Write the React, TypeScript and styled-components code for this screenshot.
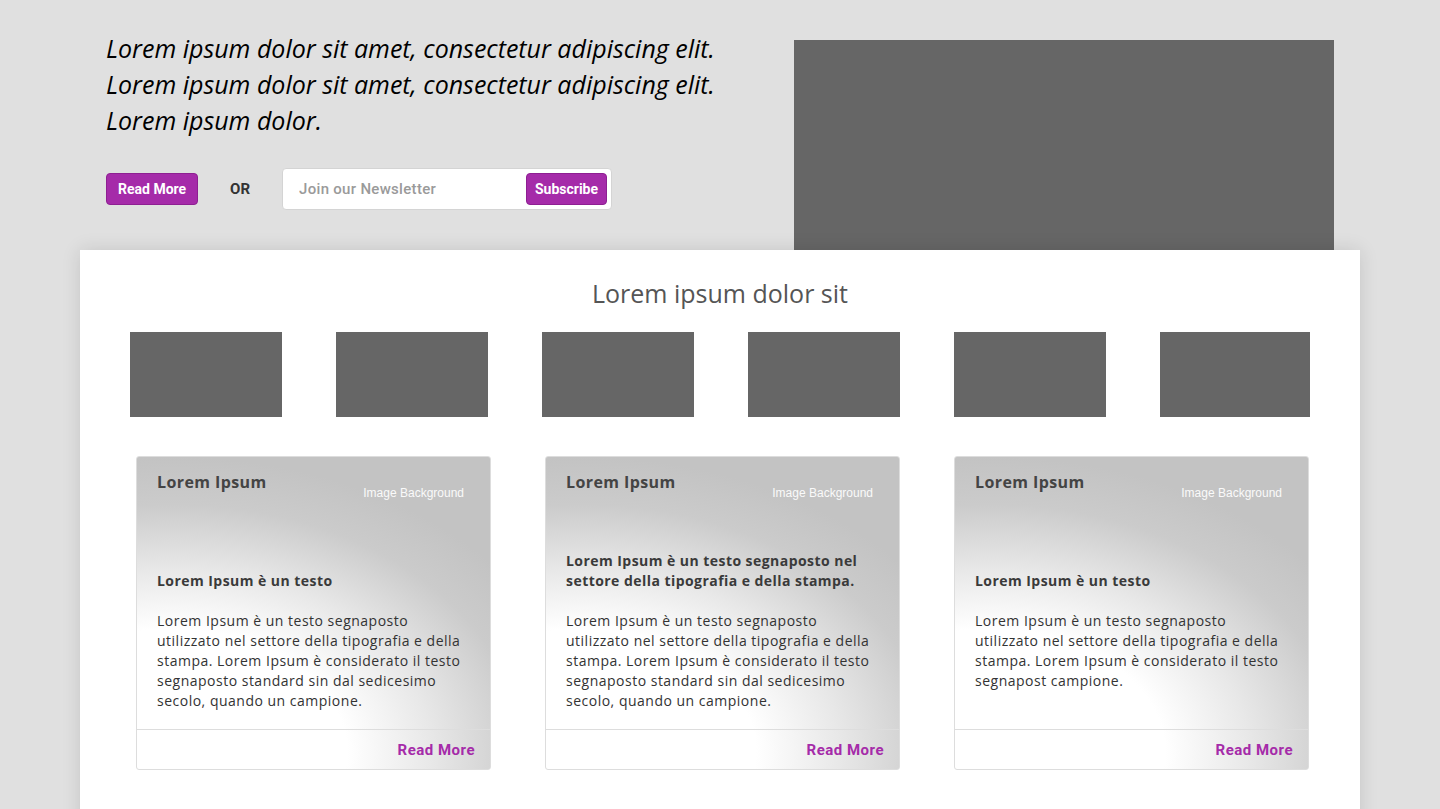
import styled, { createGlobalStyle } from 'styled-components';

const GlobalStyle = createGlobalStyle`
  * {
    box-sizing: border-box;
  }

  body {
    margin: 0;
    background-color: #e0e0e0;
    font-family: 'Open Sans', sans-serif;
    overflow: hidden;
  }
`;

const Page = styled.div`
  width: 1280px;
  margin: 0 auto;
`;

const Hero = styled.section`
  display: flex;
  justify-content: space-between;
  padding: 40px 26px 0 26px;
`;

const HeroLeft = styled.div`
  display: flex;
  flex-direction: column;
`;

const HeroText = styled.h1`
  margin: -10px 0 0;
  font-family: 'Open Sans', sans-serif;
  font-style: italic;
  font-weight: 400;
  font-size: 25px;
  line-height: 36px;
  color: #000;
`;

const Actions = styled.div`
  display: flex;
  align-items: center;
  margin-top: 30px;
`;

const PurpleButton = styled.button<{ $px: number }>`
  height: 32px;
  padding: 0 ${(p) => p.$px}px;
  border: 1px solid #8e1f92;
  border-radius: 4px;
  background-color: #a52ba9;
  color: #fff;
  font-family: Roboto, 'Liberation Sans', sans-serif;
  font-size: 14px;
  font-weight: 700;
  cursor: pointer;
`;

const Or = styled.span`
  margin: 0 32px;
  font-family: Roboto, 'Liberation Sans', sans-serif;
  font-size: 15px;
  font-weight: 700;
  color: #333;
`;

const Newsletter = styled.form`
  display: flex;
  align-items: center;
  width: 330px;
  height: 42px;
  padding: 0 4px 0 14px;
  background-color: #fff;
  border: 1px solid #d4d4d4;
  border-radius: 4px;
`;

const NewsInput = styled.input`
  flex: 1;
  min-width: 0;
  border: none;
  outline: none;
  background: transparent;
  font-family: Roboto, 'Liberation Sans', sans-serif;
  font-size: 15px;
  font-weight: 500;
  letter-spacing: 0.3px;
  color: #333;

  &::placeholder {
    color: #9a9a9a;
  }
`;

const ImageBox = styled.div<{ $w: number; $h: number }>`
  width: ${(p) => p.$w}px;
  height: ${(p) => p.$h}px;
  background-color: #666;
  flex-shrink: 0;
`;

const Panel = styled.main`
  background-color: #fff;
  box-shadow: 0 0 18px rgba(0, 0, 0, 0.12);
  padding: 25px 50px 60px;
  position: relative;
`;

const PanelTitle = styled.h2`
  margin: 0;
  text-align: center;
  font-family: 'Open Sans', sans-serif;
  font-weight: 400;
  font-size: 25px;
  line-height: 36px;
  color: #555;
`;

const Thumbs = styled.div`
  display: flex;
  gap: 54px;
  margin-top: 21px;
`;

const Cards = styled.div`
  display: grid;
  grid-template-columns: repeat(3, 355px);
  column-gap: 54px;
  margin-top: 39px;
  padding-left: 6px;
`;

const Card = styled.article`
  display: flex;
  flex-direction: column;
  height: 314px;
  border: 1px solid #ddd;
  border-radius: 3px;
  overflow: hidden;
  background: radial-gradient(
    ellipse 118% 95% at 10% 95%,
    #ffffff 0%,
    #ffffff 42%,
    #e8e8e8 62%,
    #cbcbcb 84%,
    #c3c3c3 100%
  );
`;

const CardBody = styled.div`
  flex: 1;
  display: flex;
  flex-direction: column;
  padding: 15px 21px 0 20px;
`;

const CardHead = styled.div`
  display: flex;
  justify-content: space-between;
  align-items: flex-start;
  height: 20px;
  padding-right: 5px;
`;

const CardTitle = styled.h3`
  margin: 0;
  font-family: 'Open Sans', sans-serif;
  font-size: 16px;
  font-weight: 700;
  line-height: 20px;
  letter-spacing: 0.4px;
  color: #444;
`;

const BgLabel = styled.span`
  margin-top: 14px;
  font-family: 'Liberation Sans', Arial, sans-serif;
  font-size: 12px;
  line-height: 14px;
  color: #fafafa;
`;

const SubtitleWrap = styled.div`
  display: flex;
  align-items: flex-end;
  height: 99px;
`;

const Subtitle = styled.h4`
  margin: 0;
  font-family: 'Open Sans', sans-serif;
  font-size: 14px;
  font-weight: 700;
  line-height: 20px;
  letter-spacing: 0.45px;
  color: #3a3a3a;
`;

const CardText = styled.p`
  margin: 20px 0 0;
  font-family: 'Open Sans', sans-serif;
  font-size: 14px;
  line-height: 20px;
  letter-spacing: 0.5px;
  color: #333;
`;

const CardFooter = styled.div`
  display: flex;
  justify-content: flex-end;
  align-items: center;
  height: 40px;
  padding-right: 15px;
  border-top: 1px solid #ddd;
`;

const CardLink = styled.a`
  font-family: Roboto, 'Liberation Sans', sans-serif;
  font-size: 15px;
  font-weight: 700;
  letter-spacing: 0.5px;
  color: #a52ba9;
  text-decoration: none;
  cursor: pointer;
`;

const cards = [
  {
    subtitle: 'Lorem Ipsum è un testo',
    text: 'Lorem Ipsum è un testo segnaposto utilizzato nel settore della tipografia e della stampa. Lorem Ipsum è considerato il testo segnaposto standard sin dal sedicesimo secolo, quando un campione.',
  },
  {
    subtitle: 'Lorem Ipsum è un testo segnaposto nel settore della tipografia e della stampa.',
    text: 'Lorem Ipsum è un testo segnaposto utilizzato nel settore della tipografia e della stampa. Lorem Ipsum è considerato il testo segnaposto standard sin dal sedicesimo secolo, quando un campione.',
  },
  {
    subtitle: 'Lorem Ipsum è un testo',
    text: 'Lorem Ipsum è un testo segnaposto utilizzato nel settore della tipografia e della stampa. Lorem Ipsum è considerato il testo segnapost campione.',
  },
];

function App() {
  return (
    <>
      <GlobalStyle />
      <Page>
        <Hero>
          <HeroLeft>
            <HeroText>
              Lorem ipsum dolor sit amet, consectetur adipiscing elit.
              <br />
              Lorem ipsum dolor sit amet, consectetur adipiscing elit.
              <br />
              Lorem ipsum dolor.
            </HeroText>
            <Actions>
              <PurpleButton type="button" $px={11}>
                Read More
              </PurpleButton>
              <Or>OR</Or>
              <Newsletter onSubmit={(e) => e.preventDefault()}>
                <NewsInput placeholder="Join our Newsletter" />
                <PurpleButton type="submit" $px={8}>
                  Subscribe
                </PurpleButton>
              </Newsletter>
            </Actions>
          </HeroLeft>
          <ImageBox $w={540} $h={210} />
        </Hero>

        <Panel>
          <PanelTitle>Lorem ipsum dolor sit</PanelTitle>
          <Thumbs>
            {[152, 152, 152, 152, 152, 150].map((w, i) => (
              <ImageBox key={i} $w={w} $h={85} />
            ))}
          </Thumbs>
          <Cards>
            {cards.map((c, i) => (
              <Card key={i}>
                <CardBody>
                  <CardHead>
                    <CardTitle>Lorem Ipsum</CardTitle>
                    <BgLabel>Image Background</BgLabel>
                  </CardHead>
                  <SubtitleWrap>
                    <Subtitle>{c.subtitle}</Subtitle>
                  </SubtitleWrap>
                  <CardText>{c.text}</CardText>
                </CardBody>
                <CardFooter>
                  <CardLink>Read More</CardLink>
                </CardFooter>
              </Card>
            ))}
          </Cards>
        </Panel>
      </Page>
    </>
  );
}

export default App;
